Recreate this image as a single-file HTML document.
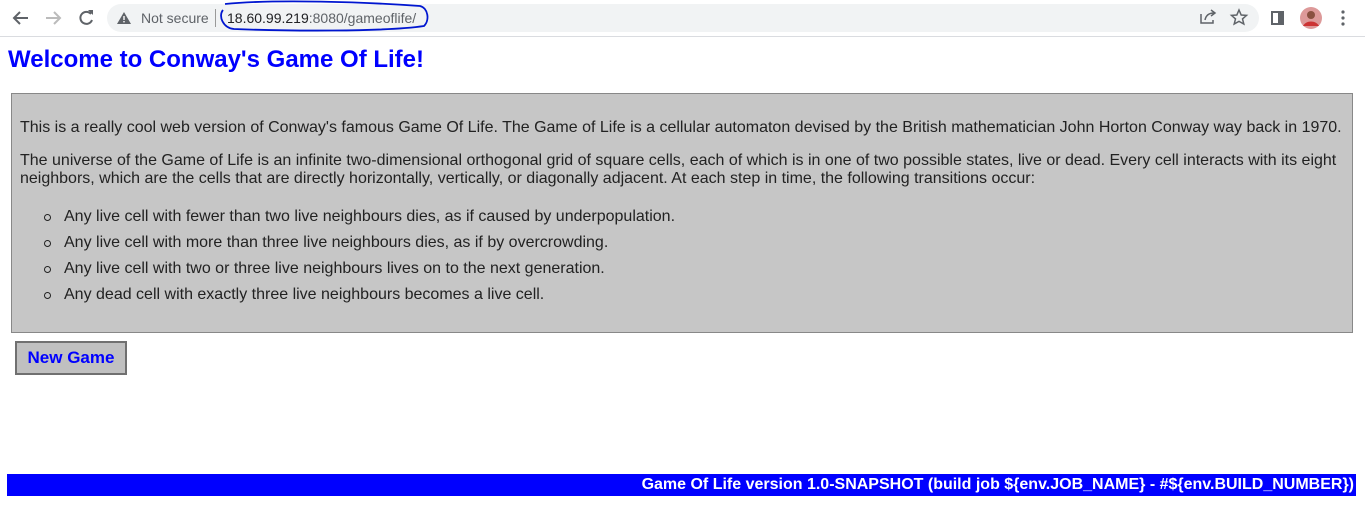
<!DOCTYPE html>
<html><head><meta charset="utf-8"><style>
body{margin:0;width:1365px;height:507px;overflow:hidden;background:#fff;font-family:"Liberation Sans",Arial,sans-serif;position:relative}
.bar{position:absolute;left:0;top:0;width:1365px;height:36px;background:#fff;border-bottom:1px solid #dadce0}
.omni{position:absolute;left:107px;top:4px;width:1152px;height:28px;border-radius:14px;background:#f1f3f4}
.t{position:absolute;font-size:14px;color:#5f6368}
h1{position:absolute;left:8px;top:46px;margin:0;font-size:24px;color:#00f;font-weight:bold}
.box{position:absolute;left:11px;top:93px;width:1340px;height:238px;background:#c6c6c6;border:1px solid #888;font-size:16px;color:#222}
.box p{margin:0;position:absolute;left:8px;line-height:18px}
.box p.li{left:52px}
.box p.li:before{content:"";position:absolute;left:-20px;top:6px;width:5px;height:5px;border:1px solid #222;border-radius:50%}
.btn{position:absolute;left:15px;top:341px;width:108px;height:30px;background:#c0c0c0;border:2px solid #707070;color:#00f;font-weight:bold;font-size:17px;text-align:center;line-height:29px}
.foot{position:absolute;left:7px;top:474px;width:1349px;height:22px;background:#00f;color:#fff;font-weight:bold;font-size:16px;text-align:right;line-height:22px;box-sizing:border-box;padding-right:2px}
</style></head><body>
<div class="bar">
<svg width="100" height="36" style="position:absolute;left:0;top:0">
<path d="M28 18H14M20 12l-6 6 6 6" stroke="#5f6368" stroke-width="2" fill="none"/>
<path d="M46 18h14M54 12l6 6-6 6" stroke="#bbb" stroke-width="2" fill="none"/>
<path d="M91 14a6 6 0 1 0 1 6" stroke="#5f6368" stroke-width="2" fill="none"/><path d="M88 10h5v5z" fill="#5f6368"/>
</svg>
<div class="omni"></div>
<svg width="16" height="16" style="position:absolute;left:116px;top:10px"><path d="M8 2L15 14H1z" fill="#5f6368"/><rect x="7.3" y="6" width="1.4" height="4" fill="#fff"/><rect x="7.3" y="11" width="1.4" height="1.4" fill="#fff"/></svg>
<div class="t" style="left:141px;top:10px">Not secure</div>
<div style="position:absolute;left:215px;top:9px;width:1px;height:18px;background:#999"></div>
<div class="t" style="left:227px;top:10px;color:#202124">18.60.99.219<span style="color:#5f6368">:8080/gameoflife/</span></div>
<svg width="220" height="36" style="position:absolute;left:215px;top:0"><path d="M10 4C60 -1 150 2 205 6c8 2 10 14 4 20-40 6-140 5-190 3C8 28 3 16 8 10" stroke="#0016d0" stroke-width="1.8" fill="none"/></svg>
<svg width="180" height="36" style="position:absolute;left:1185px;top:0">
<path d="M16 14v9h12v-3M20 20c1-5 4-7 9-7M26 10l4 3-4 3" stroke="#5f6368" stroke-width="1.5" fill="none"/>
<path d="M54 10l2.2 5 5.3.4-4 3.5 1.3 5.1L54 21.3 49.2 24l1.3-5.1-4-3.5 5.3-.4z" stroke="#5f6368" stroke-width="1.5" fill="none"/>
<rect x="87" y="12" width="11" height="12" stroke="#5f6368" stroke-width="2" fill="none"/><rect x="93" y="12" width="5" height="12" fill="#5f6368"/>
<circle cx="126" cy="18" r="11" fill="#d99"/><circle cx="126" cy="15" r="4" fill="#8a5040"/><path d="M118 26c3-6 13-6 16 0" fill="#c33"/>
<circle cx="158" cy="12" r="1.6" fill="#5f6368"/><circle cx="158" cy="18" r="1.6" fill="#5f6368"/><circle cx="158" cy="24" r="1.6" fill="#5f6368"/>
</svg>
</div>
<h1>Welcome to Conway's Game Of Life!</h1>
<div class="box">
<p style="top:25px">This is a really cool web version of Conway's famous Game Of Life. The Game of Life is a cellular automaton devised by the British mathematician John Horton Conway way back in 1970.</p>
<p style="top:58px">The universe of the Game of Life is an infinite two-dimensional orthogonal grid of square cells, each of which is in one of two possible states, live or dead. Every cell interacts with its eight neighbors, which are the cells that are directly horizontally, vertically, or diagonally adjacent. At each step in time, the following transitions occur:</p>
<p class="li" style="top:114px">Any live cell with fewer than two live neighbours dies, as if caused by underpopulation.</p>
<p class="li" style="top:140px">Any live cell with more than three live neighbours dies, as if by overcrowding.</p>
<p class="li" style="top:166px">Any live cell with two or three live neighbours lives on to the next generation.</p>
<p class="li" style="top:192px">Any dead cell with exactly three live neighbours becomes a live cell.</p>
</div>
<div class="btn">New Game</div>
<div class="foot">Game Of Life version 1.0-SNAPSHOT (build job ${env.JOB_NAME} - #${env.BUILD_NUMBER})</div>
</body></html>
